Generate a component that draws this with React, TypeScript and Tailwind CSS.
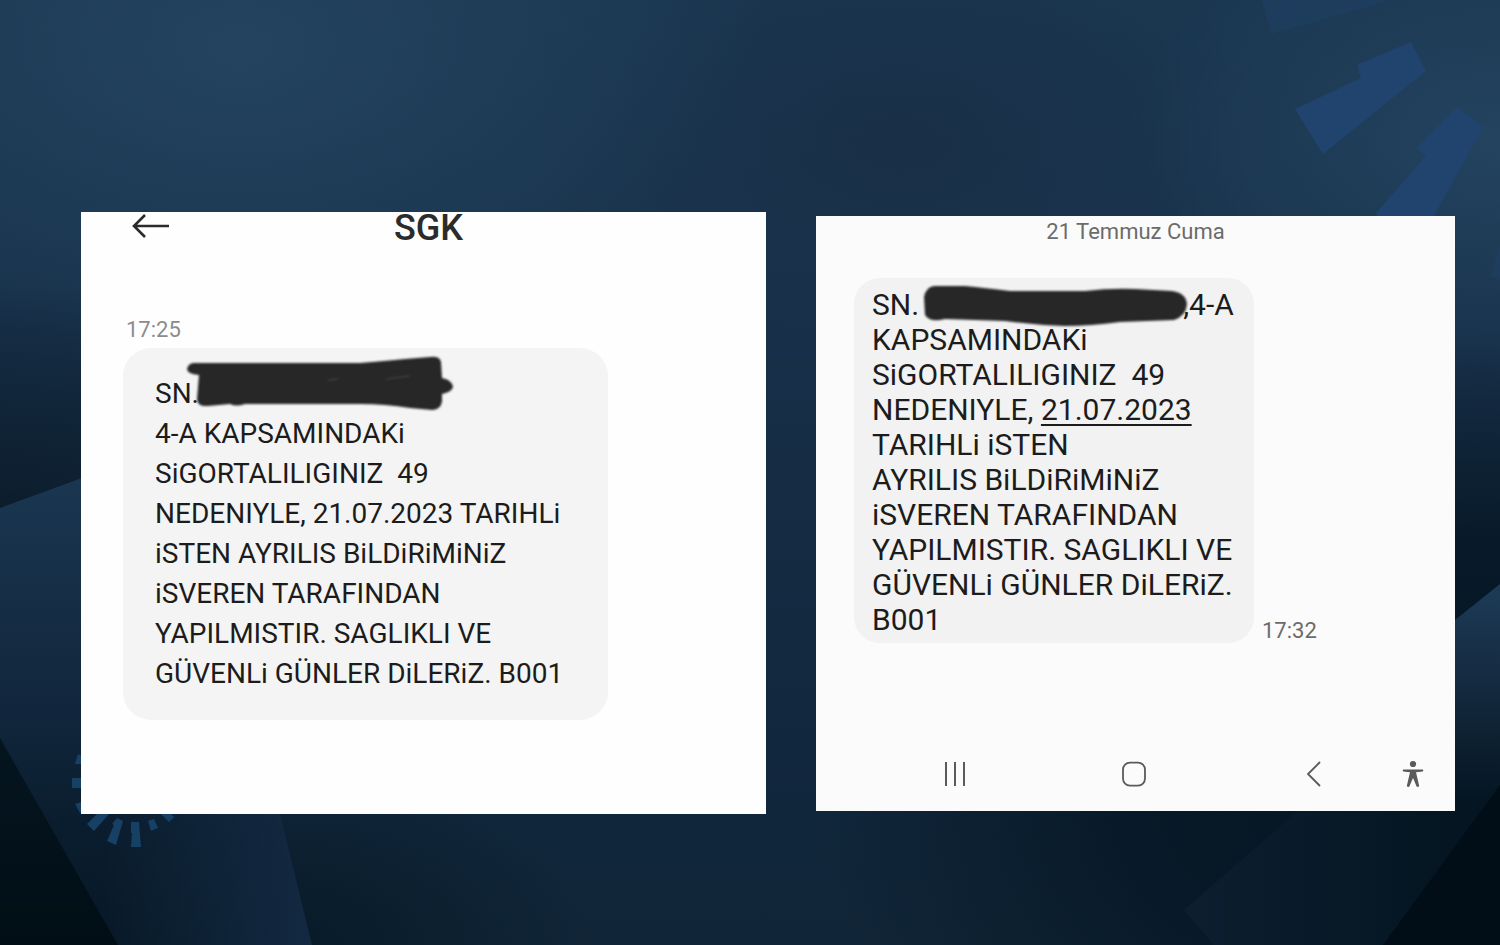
import type { ReactNode } from "react";

function Backdrop() {
	return (
		<svg
			className="absolute inset-0 h-full w-full"
			viewBox="0 0 1500 945"
			preserveAspectRatio="none"
			aria-hidden="true"
		>
			<defs>
				<linearGradient id="base" x1="0" y1="0" x2="0" y2="1">
					<stop offset="0" stopColor="#1b3750" />
					<stop offset="0.25" stopColor="#19334c" />
					<stop offset="0.5" stopColor="#152c44" />
					<stop offset="0.8" stopColor="#11273d" />
					<stop offset="1" stopColor="#102537" />
				</linearGradient>
				<radialGradient id="center" cx="0.6" cy="0.15" r="0.25">
					<stop offset="0" stopColor="#192f48" />
					<stop offset="1" stopColor="#192f48" stopOpacity="0" />
				</radialGradient>
				<radialGradient id="topLeft" cx="0.16" cy="0.05" r="0.35">
					<stop offset="0" stopColor="#23435f" />
					<stop offset="1" stopColor="#23435f" stopOpacity="0" />
				</radialGradient>
				<radialGradient id="topRight" cx="1" cy="0.15" r="0.25">
					<stop offset="0" stopColor="#23435f" />
					<stop offset="1" stopColor="#23435f" stopOpacity="0" />
				</radialGradient>
				<radialGradient id="sideLeft" cx="0" cy="0.56" r="0.26">
					<stop offset="0" stopColor="#0b1c2b" />
					<stop offset="1" stopColor="#0b1c2b" stopOpacity="0" />
				</radialGradient>
				<radialGradient id="sideRight" cx="1" cy="0.82" r="0.46">
					<stop offset="0" stopColor="#041421" />
					<stop offset="0.5" stopColor="#061725" stopOpacity="0.9" />
					<stop offset="1" stopColor="#061725" stopOpacity="0" />
				</radialGradient>
				<radialGradient id="bottomLeft" cx="0.19" cy="1" r="0.2">
					<stop offset="0" stopColor="#071a28" />
					<stop offset="1" stopColor="#071a28" stopOpacity="0" />
				</radialGradient>
				<linearGradient id="leftPlane" x1="0" y1="480" x2="0" y2="945" gradientUnits="userSpaceOnUse">
					<stop offset="0" stopColor="#1a3650" />
					<stop offset="0.5" stopColor="#11263c" />
					<stop offset="0.75" stopColor="#0a1d2e" />
					<stop offset="1" stopColor="#071927" />
				</linearGradient>
				<linearGradient id="leftGlow" x1="100" y1="0" x2="310" y2="0" gradientUnits="userSpaceOnUse">
					<stop offset="0" stopColor="#132941" stopOpacity="0" />
					<stop offset="1" stopColor="#132941" />
				</linearGradient>
				<linearGradient id="leftCorner" x1="0" y1="740" x2="0" y2="945" gradientUnits="userSpaceOnUse">
					<stop offset="0" stopColor="#05151f" />
					<stop offset="1" stopColor="#010e16" />
				</linearGradient>
				<linearGradient id="rightPlane" x1="0" y1="590" x2="0" y2="800" gradientUnits="userSpaceOnUse">
					<stop offset="0" stopColor="#1d3a55" />
					<stop offset="0.5" stopColor="#13283d" />
					<stop offset="1" stopColor="#051622" />
				</linearGradient>
				<linearGradient id="rightFloor" x1="1184" y1="0" x2="1480" y2="0" gradientUnits="userSpaceOnUse">
					<stop offset="0" stopColor="#0c1f30" />
					<stop offset="1" stopColor="#041420" />
				</linearGradient>
			</defs>
			<rect width="1500" height="945" fill="url(#base)" />
			<rect width="1500" height="945" fill="url(#center)" />
			<rect width="1500" height="945" fill="url(#topLeft)" />
			<rect width="1500" height="945" fill="url(#topRight)" />
			<rect width="1500" height="945" fill="url(#sideLeft)" />
			<rect width="1500" height="945" fill="url(#sideRight)" />
			<rect width="1500" height="945" fill="url(#bottomLeft)" />

			<path d="M0 508 L82 478 L240 680 L312 945 L0 945Z" fill="url(#leftPlane)" />
			<path d="M82 814 L280 814 L312 945 L118 945Z" fill="url(#leftGlow)" />
			<path d="M0 738 L118 945 H0Z" fill="url(#leftCorner)" />

			<path d="M1500 584 L1298 811 L1184 910 L1214 945 H1500Z" fill="url(#rightFloor)" />
			<path d="M1500 584 L1455 620 V845 L1500 785Z" fill="url(#rightPlane)" />
			<path d="M1500 785 L1383 945 H1500Z" fill="#020e17" />

			<g fill="#21446f">
				<path d="M1262 0 L1271 34 L1390 0Z" opacity="0.4" />
				<path d="M1295 109 L1361 78 L1357 65 L1411 42 L1426 71 L1323 154Z" />
				<path d="M1457 107 L1483 127 L1434 216 H1377 L1376 213 L1426 156 L1416 149Z" />
				<path d="M1500 245 L1490 276 L1500 280Z" opacity="0.4" />
			</g>
			<g fill="#174065">
				<path d="M78 754 L85 758 L82 764 L75 764Z" />
				<path d="M72 778 H82 V788 H72Z" />
				<path d="M75 804 L84 801 L87 810 L80 813Z" />
				<path d="M98 813 H110 L94 831 L87 824Z" />
				<path d="M117 818 L123 821 L116 845 L107 841 L114 825 L112 824Z" />
				<path d="M131 822 H139 L141 847 H131 L132 833 H131Z" />
				<path d="M148 821 L154 819 L158 828 L151 831Z" />
				<path d="M161 814 H171 L174 817 L169 822Z" />
			</g>
		</svg>
	);
}

function Bubble({ className, children }: { className: string; children: ReactNode }) {
	return (
		<div className={`shrink-0 whitespace-pre text-[#1c1c1c] ${className}`}>{children}</div>
	);
}

function ArrowLeft() {
	return (
		<svg width="40" height="28" viewBox="0 0 40 28" fill="none" stroke="#2b2b2b" strokeWidth="2.6">
			<path d="M3 12H38M14 1L3 12L14 23" />
		</svg>
	);
}

function SgkChat() {
	return (
		<section className="bg-[#fefefe] pb-[94px] pl-[42px]">
			<header className="relative flex h-8 items-center justify-center pr-8">
				<button type="button" aria-label="Geri" className="absolute left-2">
					<ArrowLeft />
				</button>
				<h1 className="text-[36px] leading-8 font-medium text-[#2b2b2b]">SGK</h1>
			</header>
			<time className="mt-[74px] block pl-[3px] text-[22px] leading-6 text-[#8c8c8c]">17:25</time>
			<Bubble className="mt-1.5 w-[485px] rounded-[28px] bg-[#f4f4f4] px-8 pt-[26px] pb-[26px] text-[28px] leading-10">
				<p className="relative">
					SN.
					<svg
						className="absolute -top-[22px] left-7 blur-[1px]"
						width="272"
						height="62"
						viewBox="183 352 272 62"
						fill="#272727"
						aria-hidden="true"
					>
						<path d="M193 363 L205 363 L360 363 Q385 361 405 359 L430 357 Q440 356 441 362 L442 378 Q452 380 453 387 Q452 392 442 394 V402 Q440 410 432 410 L410 408 Q385 404 360 404 H245 Q236 407 230 404 L208 406 Q197 407 197 399 L199 375 Q187 374 187 369 Q188 364 193 363Z" />
						<path d="M328 380 L338 379 M386 379 L410 376" stroke="#4a4a4a" strokeWidth="1" />
					</svg>
				</p>
				<p>4-A KAPSAMINDAKi</p>
				<p>{"SiGORTALILIGINIZ  49"}</p>
				<p>NEDENIYLE, 21.07.2023 TARIHLi</p>
				<p>iSTEN AYRILIS BiLDiRiMiNiZ</p>
				<p>iSVEREN TARAFINDAN</p>
				<p>YAPILMISTIR. SAGLIKLI VE</p>
				<p>GÜVENLi GÜNLER DiLERiZ. B001</p>
			</Bubble>
		</section>
	);
}

function NavBar() {
	return (
		<nav className="mt-[94px] grid h-[74px] grid-cols-[179fr_180fr_99fr_62fr] items-center pl-[119px] text-[#5a5a5a]">
			<button type="button" aria-label="Son uygulamalar" className="flex w-10 justify-center">
				<svg width="26" height="26" viewBox="0 0 26 26" fill="none" stroke="currentColor" strokeWidth="2">
					<path d="M4 1V25M13 1V25M22 1V25" />
				</svg>
			</button>
			<button type="button" aria-label="Ana ekran" className="flex w-10 justify-center">
				<svg width="26" height="26" viewBox="0 0 26 26" fill="none" stroke="currentColor" strokeWidth="1.8">
					<rect x="2" y="1.6" width="22" height="23" rx="7" />
				</svg>
			</button>
			<button type="button" aria-label="Geri" className="flex w-10 justify-center">
				<svg width="26" height="26" viewBox="0 0 26 26" fill="none" stroke="currentColor" strokeWidth="1.8">
					<path d="M19 1L7 13L19 25" />
				</svg>
			</button>
			<button type="button" aria-label="Erişilebilirlik" className="flex w-10 justify-center">
				<svg width="22" height="28" viewBox="0 0 22 28" fill="currentColor">
					<circle cx="11" cy="4" r="3.1" />
					<path d="M1.2 9.4H20.8Q22 10.5 20.8 11.6L14 12.3L17.2 26Q16 27.6 14.6 26.6L11.3 18.5H10.7L7.4 26.6Q6 27.6 4.8 26L8 12.3L1.2 11.6Q0 10.5 1.2 9.4Z" />
				</svg>
			</button>
		</nav>
	);
}

function DatedChat() {
	return (
		<section className="mt-1 bg-[#fbfbfb]">
			<time className="block h-8 text-center text-[22px] leading-8 text-[#6b6b6b]">21 Temmuz Cuma</time>
			<div className="mt-[30px] flex items-end gap-2 pl-[38px]">
				<Bubble className="w-[400px] rounded-[26px] bg-[#f2f2f2] px-[18px] pt-[9px] pb-1.5 text-[30px] leading-[35px]">
					<p className="relative">
						SN.
						<span className="inline-block w-[264px]" />
						,4-A
						<svg
							className="absolute -top-2 left-12 blur-[1px]"
							width="272"
							height="52"
							viewBox="920 278 272 52"
							fill="#272727"
							aria-hidden="true"
						>
							<path d="M934 285 L965 285 Q985 287 1010 290 L1085 290 Q1110 287 1135 288 L1172 290 Q1186 292 1187 303 Q1186 315 1174 319 L1120 321 Q1090 325 1065 325 Q1035 324 1005 320 L945 318 Q930 322 925 314 L924 296 Q926 286 934 285Z" />
						</svg>
					</p>
					<p>KAPSAMINDAKi</p>
					<p>{"SiGORTALILIGINIZ  49"}</p>
					<p>
						NEDENIYLE,{" "}
						<a href="#tarih" className="underline decoration-2 underline-offset-4">
							21.07.2023
						</a>
					</p>
					<p>TARIHLi iSTEN</p>
					<p>AYRILIS BiLDiRiMiNiZ</p>
					<p>iSVEREN TARAFINDAN</p>
					<p>YAPILMISTIR. SAGLIKLI VE</p>
					<p>GÜVENLi GÜNLER DiLERiZ.</p>
					<p>B001</p>
				</Bubble>
				<time className="text-[22px] leading-6 text-[#6b6b6b]">17:32</time>
			</div>
			<NavBar />
		</section>
	);
}

export default function App() {
	return (
		<main className="relative min-h-screen bg-[#152a42] font-['Roboto',sans-serif]">
			<Backdrop />
			<div className="relative grid grid-cols-[685fr_639fr] items-start gap-[50px] pt-[212px] pr-[45px] pb-[131px] pl-[81px]">
				<SgkChat />
				<DatedChat />
			</div>
		</main>
	);
}
